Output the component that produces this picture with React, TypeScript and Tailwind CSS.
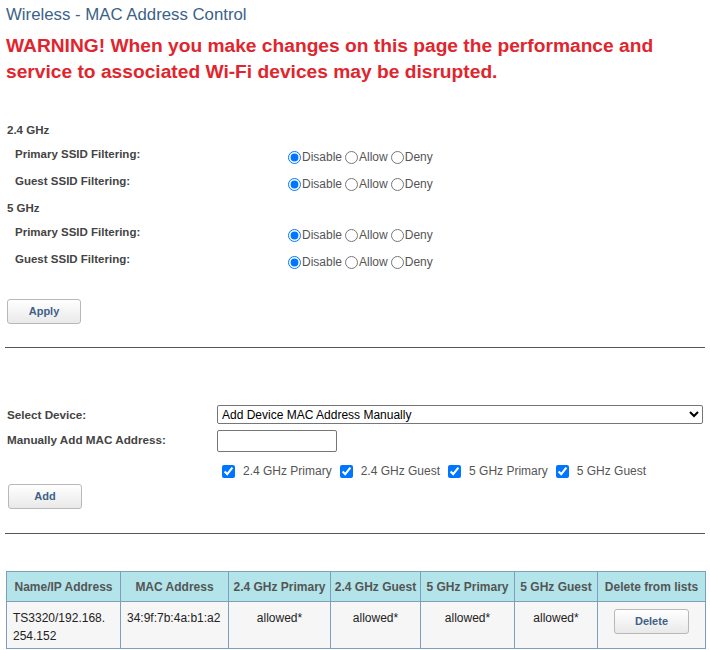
const font = { fontFamily: '"Liberation Sans", Arial, sans-serif' };

function Button({ children, className = '' }: { children: string; className?: string }) {
  return (
    <button
      className={`h-[25px] w-[74px] rounded-[3px] border border-[#b8b8b8] bg-linear-to-b from-white to-[#e9e9e9] text-[11px] font-bold text-[#3d6187] ${className}`}
    >
      {children}
    </button>
  );
}

function FilterRow({ label, name }: { label: string; name: string }) {
  return (
    <div className="flex h-[27px]">
      <div className="w-[283px] pl-[10px] text-[11.5px] font-bold leading-[16px] text-[#444]">{label}</div>
      <div className="mt-[3px] flex h-[16px] items-center text-[12px] text-[#555]">
        {['Disable', 'Allow', 'Deny'].map((opt, i) => (
          <label key={opt} className="mr-[3px] flex items-center">
            <input type="radio" name={name} defaultChecked={i === 0} className="h-[13px] w-[13px]" />
            <span className="ml-[1px]">{opt}</span>
          </label>
        ))}
      </div>
    </div>
  );
}

function BandHeader({ children }: { children: string }) {
  return <div className="h-[24px] pl-[2px] text-[11.5px] font-bold leading-[16px] text-[#444]">{children}</div>;
}

const cols = [
  { title: 'Name/IP Address', w: 'w-[114px]' },
  { title: 'MAC Address', w: 'w-[108px]' },
  { title: '2.4 GHz Primary', w: 'w-[102px]' },
  { title: '2.4 GHz Guest', w: 'w-[90px]' },
  { title: '5 GHz Primary', w: 'w-[94px]' },
  { title: '5 GHz Guest', w: 'w-[83px]' },
  { title: 'Delete from lists', w: 'w-[108px]' },
];

export default function App() {
  return (
    <div className="w-[705px] pl-[5px]" style={font}>
      <div className="pt-[5px] pl-[1px] text-[16.8px] leading-[20px] text-[#3b6288]">Wireless - MAC Address Control</div>
      <div className="mt-[8px] pl-[1px] text-[19.2px] font-bold leading-[26px] text-[#e0252e]">
        WARNING! When you make changes on this page the performance and
        <br />
        service to associated Wi-Fi devices may be disrupted.
      </div>

      <div className="mt-[37px]">
        <BandHeader>2.4 GHz</BandHeader>
        <FilterRow label="Primary SSID Filtering:" name="p24" />
        <FilterRow label="Guest SSID Filtering:" name="g24" />
        <BandHeader>5 GHz</BandHeader>
        <FilterRow label="Primary SSID Filtering:" name="p5" />
        <FilterRow label="Guest SSID Filtering:" name="g5" />
      </div>

      <Button className="mt-[21px] ml-[2px]">Apply</Button>

      <div className="mt-[23px] border-t border-[#555]" />

      <div className="mt-[57px] flex items-center">
        <div className="w-[212px] pl-[2px] text-[11.7px] font-bold text-[#444]">Select Device:</div>
        <select className="h-[19px] w-[486px] rounded-[2px] border border-[#767676] bg-white text-[12px] text-black">
          <option>Add Device MAC Address Manually</option>
        </select>
      </div>
      <div className="mt-[6px] flex items-start">
        <div className="w-[212px] pt-[1px] pl-[2px] text-[11.7px] font-bold text-[#444]">Manually Add MAC Address:</div>
        <input type="text" className="h-[22px] w-[120px] rounded-[2px] border border-[#767676] bg-white" />
      </div>
      <div className="mt-[10px] ml-[212px] flex h-[18px] items-center pl-[5px] text-[12px] text-[#555]">
        {['2.4 GHz Primary', '2.4 GHz Guest', '5 GHz Primary', '5 GHz Guest'].map((opt) => (
          <label key={opt} className="mr-[8px] flex items-center">
            <input type="checkbox" defaultChecked className="h-[13px] w-[13px]" />
            <span className="ml-[8px]">{opt}</span>
          </label>
        ))}
      </div>

      <Button className="mt-[4px] ml-[3px]">Add</Button>

      <div className="mt-[24px] border-t border-[#555]" />

      <table className="mt-[37px] ml-[1px] w-[699px] table-fixed border-collapse text-[12px]">
        <thead>
          <tr className="h-[30px] bg-[#b2e4ea]">
            {cols.map((c) => (
              <th key={c.title} className={`${c.w} border border-[#7f9dbd] font-bold text-[#555]`}>
                {c.title}
              </th>
            ))}
          </tr>
        </thead>
        <tbody>
          <tr className="h-[47px] bg-[#f6f6f6] align-top text-[#222]">
            <td className="border border-[#7f9dbd] px-[6px] pt-[7px] leading-[18px]">TS3320/192.168.
              <br />254.152</td>
            <td className="border border-[#7f9dbd] px-[6px] pt-[7px] leading-[18px]">34:9f:7b:4a:b1:a2</td>
            <td className="border border-[#7f9dbd] pt-[7px] text-center leading-[18px]">allowed*</td>
            <td className="border border-[#7f9dbd] pt-[7px] text-center leading-[18px]">allowed*</td>
            <td className="border border-[#7f9dbd] pt-[7px] text-center leading-[18px]">allowed*</td>
            <td className="border border-[#7f9dbd] pt-[7px] text-center leading-[18px]">allowed*</td>
            <td className="border border-[#7f9dbd] pt-[7px] text-center">
              <Button className="w-[75px]">Delete</Button>
            </td>
          </tr>
        </tbody>
      </table>
    </div>
  );
}
